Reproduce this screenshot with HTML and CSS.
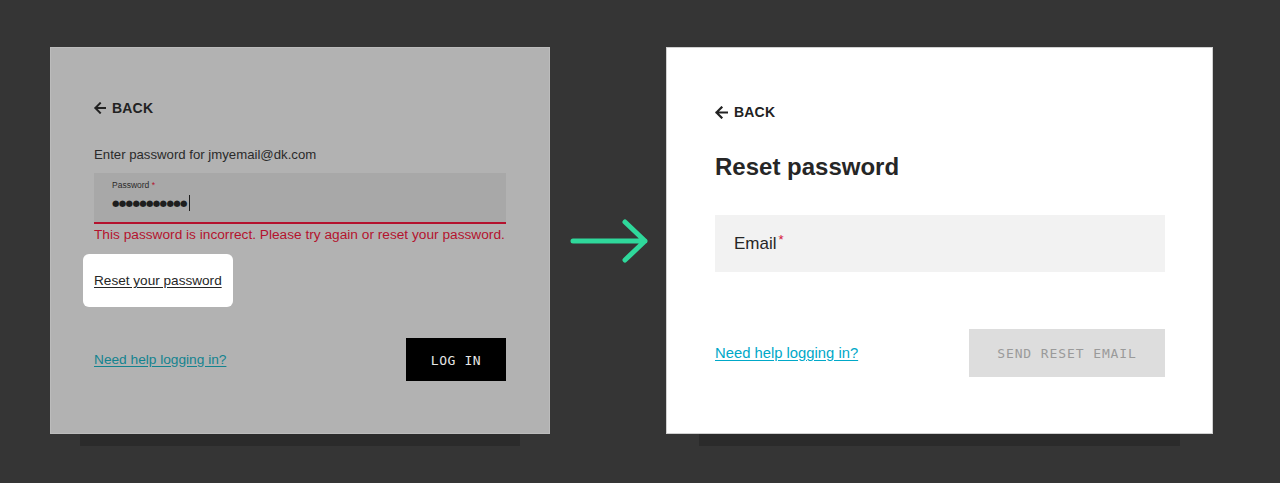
FILE: index.html
```html
<!DOCTYPE html>
<html>
<head>
<meta charset="utf-8">
<link rel="stylesheet" href="styles.css">
</head>
<body>
<div class="stage">
  <div class="frame frame-left">
    <div class="card card-dim">
      <div class="back back-dim">
        <svg class="back-icon" viewBox="0 0 12 12" width="12" height="12"><path d="M11 6H1.5M6 1.3L1.3 6L6 10.7" fill="none" stroke="currentColor" stroke-width="2" stroke-linecap="square"/></svg>
        <span>BACK</span>
      </div>
      <p class="prompt">Enter password for jmyemail@dk.com</p>
      <div class="pw-field">
        <div class="pw-label">Password <span class="req-dim">*</span></div>
        <div class="pw-value"><span class="dots">●●●●●●●●●●●</span><span class="caret"></span></div>
      </div>
      <p class="error">This password is incorrect. Please try again or reset your password.</p>
      <div class="highlight"><a class="reset-link">Reset your password</a></div>
      <div class="footer footer-left">
        <a class="help help-dim">Need help logging in?</a>
        <button class="btn-login">LOG IN</button>
      </div>
    </div>
    <div class="strip"></div>
  </div>

  <div class="divider">
    <svg viewBox="0 0 80 46" width="80" height="46"><path d="M3 23H75M55 4L75 23L55 42" fill="none" stroke="#2fd89b" stroke-width="5" stroke-linecap="round" stroke-linejoin="round"/></svg>
  </div>

  <div class="frame frame-right">
    <div class="card card-white">
      <div class="back back-white">
        <svg class="back-icon" viewBox="0 0 12 12" width="13" height="13"><path d="M11 6H1.5M6 1.3L1.3 6L6 10.7" fill="none" stroke="currentColor" stroke-width="2" stroke-linecap="square"/></svg>
        <span>BACK</span>
      </div>
      <h1 class="title">Reset password</h1>
      <div class="email-field">Email<span class="req">*</span></div>
      <div class="footer footer-right">
        <a class="help help-white">Need help logging in?</a>
        <button class="btn-send">SEND RESET EMAIL</button>
      </div>
    </div>
    <div class="strip"></div>
  </div>
</div>
</body>
</html>
```

FILE: styles.css
```css
* { box-sizing: border-box; }
html, body { margin: 0; padding: 0; }
body {
  background: #353535;
  font-family: "Liberation Sans", Arial, sans-serif;
  height: 483px;
  overflow: hidden;
}
.stage {
  display: flex;
  align-items: flex-start;
  padding: 47px 0 0 50px;
}
.frame { display: flex; flex-direction: column; }
.frame-left { width: 500px; }
.frame-right { width: 547px; }
.card {
  height: 387px;
  display: flex;
  flex-direction: column;
}
.strip {
  height: 12px;
  background: #2b2b2b;
}
.frame-left .strip { margin: 0 30px; }
.frame-right .strip { margin: 0 33px 0 33px; }

.card-dim {
  background: #b2b2b2;
  border: 1px solid #bcbcbc;
  padding: 50px 43px 0 43px;
  color: #262626;
}
.card-white {
  background: #ffffff;
  border: 1px solid #d0d0d0;
  padding: 54px 47px 0 48px;
  color: #262626;
}

.divider {
  width: 116px;
  height: 387px;
  display: flex;
  align-items: center;
  justify-content: center;
  padding-left: 4px;
}

.back {
  display: flex;
  align-items: center;
  gap: 6px;
  font-weight: bold;
  height: 20px;
  letter-spacing: 0.2px;
}
.back-dim { font-size: 14px; color: #222; }
.back-white { font-size: 14px; color: #222; }
.back-icon { display: block; }

.prompt {
  margin: 27px 0 0;
  font-size: 13.2px;
  line-height: 20px;
  color: #2a2a2a;
}
.pw-field {
  margin-top: 8px;
  height: 51px;
  background: #a8a8a8;
  border-bottom: 2px solid #b4122e;
  padding: 6px 0 0 18px;
}
.pw-label {
  font-size: 8.5px;
  line-height: 12px;
  color: #2a2a2a;
}
.req-dim { color: #b4122e; }
.pw-value {
  margin-top: 3px;
  display: flex;
  align-items: center;
  height: 18px;
  color: #1e1e1e;
}
.dots {
  font-family: "DejaVu Sans", sans-serif;
  font-size: 8.6px;
  letter-spacing: -0.7px;
  line-height: 18px;
}
.caret {
  display: inline-block;
  width: 1.5px;
  height: 16px;
  background: #1e1e1e;
  margin-left: 2px;
}
.error {
  margin: 1px 0 0;
  font-size: 13.7px;
  line-height: 20px;
  color: #b4122e;
  white-space: nowrap;
}
.highlight {
  margin: 9px 0 0 -11px;
  width: 150px;
  height: 53px;
  background: #ffffff;
  border-radius: 6px;
  display: flex;
  align-items: center;
  padding-left: 11px;
}
.reset-link {
  font-size: 13.6px;
  color: #262626;
  text-decoration: underline;
  text-underline-offset: 2px;
}

.footer {
  display: flex;
  justify-content: space-between;
  align-items: center;
}
.footer-left { margin-top: 31px; }
.footer-right { margin-top: 57px; }

.help {
  text-decoration: underline;
  text-underline-offset: 2px;
}
.help-dim { font-size: 13.7px; color: #13838f; }
.help-white { font-size: 14.8px; color: #00a8c8; }

button {
  border: none;
  font-family: "DejaVu Sans Mono", "Liberation Mono", monospace;
  cursor: pointer;
}
.btn-login {
  width: 100px;
  height: 43px;
  background: #000;
  color: #e6e6e6;
  font-size: 13px;
  letter-spacing: 0.6px;
  padding: 2px 0 0;
}
.btn-send {
  width: 196px;
  height: 48px;
  background: #dddddd;
  color: #9a9a9a;
  font-size: 13px;
  letter-spacing: 0.9px;
  padding: 0;
}

.title {
  margin: 29px 0 0;
  font-size: 24px;
  line-height: 32px;
  font-weight: bold;
  color: #262626;
}
.email-field {
  margin-top: 32px;
  height: 57px;
  background: #f2f2f2;
  display: flex;
  align-items: center;
  padding-left: 19px;
  font-size: 17px;
  color: #262626;
}
.req { color: #d4103a; font-size: 13px; margin-left: 2px; position: relative; top: -4px; }
```
